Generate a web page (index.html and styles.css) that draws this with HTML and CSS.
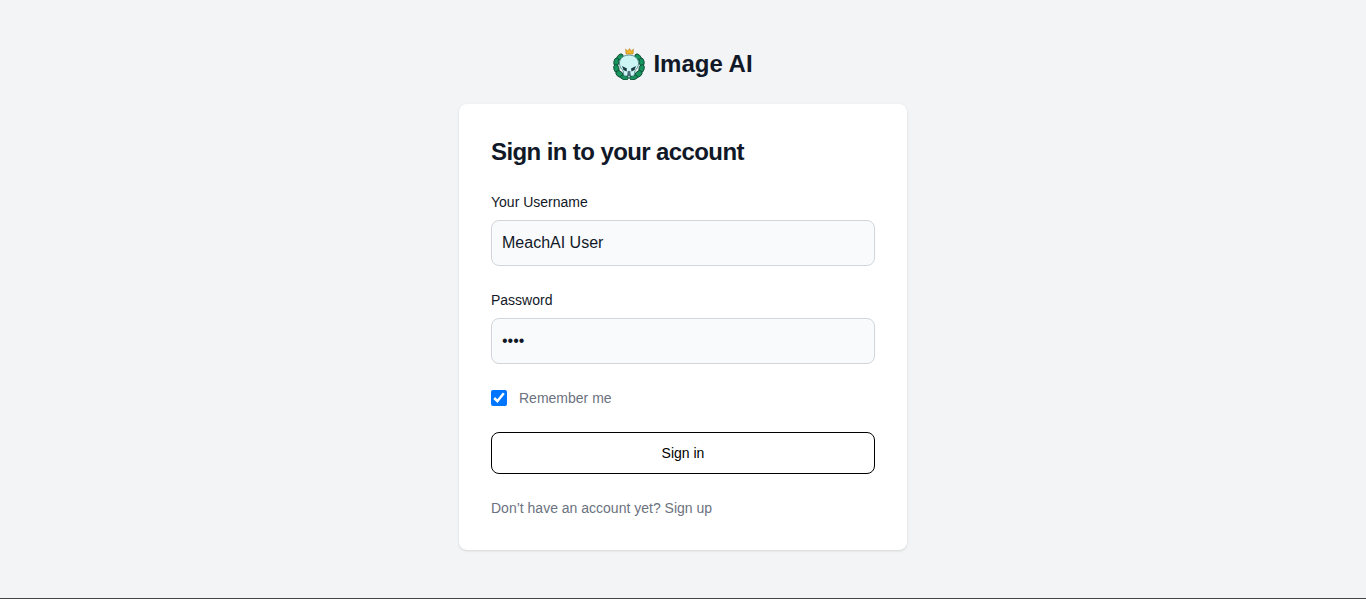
FILE: index.html
```html
<!DOCTYPE html>
<html lang="en">
<head>
<meta charset="utf-8">
<title>Image AI</title>
<link rel="stylesheet" href="styles.css">
</head>
<body>
<main class="page">
  <a class="brand" href="#">
    <svg class="brand-logo" viewBox="0 0 32 32" width="32" height="32" aria-hidden="true">
      <g fill="#17935c" stroke="#0d4532" stroke-width=".8">
        <ellipse cx="7" cy="9" rx="3.6" ry="2.4" transform="rotate(-40 7 9)"/>
        <ellipse cx="3.4" cy="14" rx="2.6" ry="4" transform="rotate(10 3.4 14)"/>
        <ellipse cx="3.4" cy="20.5" rx="2.6" ry="4" transform="rotate(-15 3.4 20.5)"/>
        <ellipse cx="6.5" cy="26" rx="4" ry="2.8" transform="rotate(40 6.5 26)"/>
        <ellipse cx="11.5" cy="29.5" rx="4" ry="2.2" transform="rotate(15 11.5 29.5)"/>
        <ellipse cx="25" cy="9" rx="3.6" ry="2.4" transform="rotate(40 25 9)"/>
        <ellipse cx="28.6" cy="14" rx="2.6" ry="4" transform="rotate(-10 28.6 14)"/>
        <ellipse cx="28.6" cy="20.5" rx="2.6" ry="4" transform="rotate(15 28.6 20.5)"/>
        <ellipse cx="25.5" cy="26" rx="4" ry="2.8" transform="rotate(-40 25.5 26)"/>
        <ellipse cx="20.5" cy="29.5" rx="4" ry="2.2" transform="rotate(-15 20.5 29.5)"/>
      </g>
      <path d="M16 7 C10.5 7 6.5 10.5 6.5 15 C6.5 18.5 8 21 10 22.5 L11 28 L21 28 L22 22.5 C24 21 25.5 18.5 25.5 15 C25.5 10.5 21.5 7 16 7 Z" fill="#cdf5f5" stroke="#2b6a6b" stroke-width=".7"/>
      <path d="M9 18 L14 20.5 L13.5 23.5 L10.5 22 Z M23 18 L18 20.5 L18.5 23.5 L21.5 22 Z" fill="#1b3a44"/>
      <path d="M14.8 23 L17.2 23 L18 28 L14 28 Z" fill="#4a6c76"/>
      <path d="M12.5 1 L14.7 3 L16.5 0.5 L18.3 3 L20.5 1 L20 6 L13 6 Z" fill="#f0b429" stroke="#a87616" stroke-width=".5"/>
    </svg>
    <span class="brand-name">Image AI</span>
  </a>
  <section class="card">
    <h1 class="title">Sign in to your account</h1>
    <form class="form">
      <div class="field">
        <label class="label" for="username">Your Username</label>
        <input class="input" id="username" type="text" value="MeachAI User">
      </div>
      <div class="field">
        <label class="label" for="password">Password</label>
        <input class="input" id="password" type="password" value="1234">
      </div>
      <div class="remember">
        <input class="check" id="remember" type="checkbox" checked>
        <label class="remember-label" for="remember">Remember me</label>
      </div>
      <button class="submit" type="button">Sign in</button>
      <p class="signup">Don’t have an account yet? <a class="signup-link" href="#">Sign up</a></p>
    </form>
  </section>
</main>
</body>
</html>
```
FILE: styles.css
```css
* { box-sizing: border-box; }
html, body { margin: 0; height: 100%; }
body {
  background: #f3f4f6;
  font-family: "Liberation Sans", Arial, sans-serif;
  overflow: hidden;
}
.page {
  height: 599px;
  padding-top: 48px;
  border-bottom: 1px solid #444;
  display: flex;
  flex-direction: column;
  align-items: center;
}
.brand {
  display: flex;
  align-items: center;
  height: 32px;
  margin-bottom: 24px;
  color: #111827;
  text-decoration: none;
}
.brand-logo { margin-right: 8px; display: block; }
.brand-name { font-size: 24px; line-height: 32px; font-weight: 700; }
.card {
  width: 448px;
  padding: 32px;
  background: #fff;
  border-radius: 8px;
  box-shadow: 0 1px 3px rgba(0,0,0,.1), 0 1px 2px -1px rgba(0,0,0,.1);
}
.title {
  margin: 0 0 24px;
  font-size: 24px;
  line-height: 32px;
  font-weight: 700;
  letter-spacing: -0.025em;
  color: #111827;
}
.form { display: flex; flex-direction: column; gap: 24px; }
.label {
  display: block;
  margin-bottom: 8px;
  font-size: 14px;
  line-height: 20px;
  color: #111827;
}
.input {
  display: block;
  width: 100%;
  height: 46px;
  padding: 0 10px;
  background: #f9fafb;
  border: 1px solid #d1d5db;
  border-radius: 8px;
  font: 16px/24px "Liberation Sans", Arial, sans-serif;
  color: #111827;
  outline: none;
}
.remember { display: flex; align-items: center; height: 20px; }
.check { width: 16px; height: 16px; margin: 0 12px 0 0; accent-color: #0075ff; }
.remember-label { font-size: 14px; line-height: 20px; color: #6b7280; }
.submit {
  display: block;
  width: 100%;
  height: 42px;
  background: #fff;
  border: 1px solid #000;
  border-radius: 8px;
  font: 14px/20px "Liberation Sans", Arial, sans-serif;
  color: #000;
}
.signup { margin: 0; font-size: 14px; line-height: 20px; color: #6b7280; }
.signup-link { color: inherit; text-decoration: none; }
```
